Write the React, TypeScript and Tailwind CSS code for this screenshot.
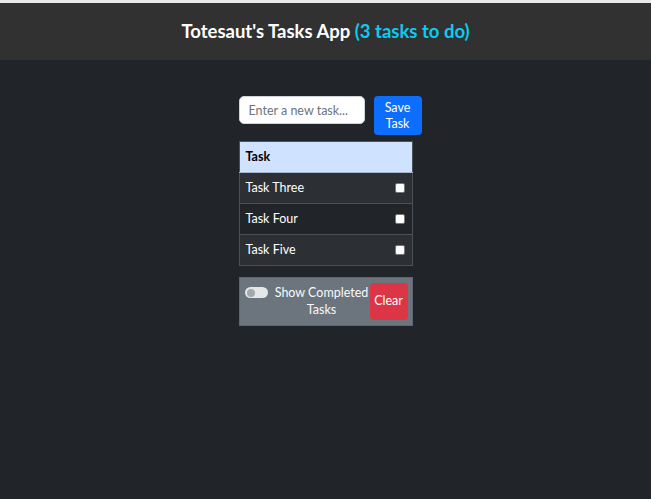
import React from "react";

const font = { fontFamily: 'Lato, "Noto Sans", sans-serif' };

export default function App() {
  const tasks = ["Task Three", "Task Four", "Task Five"];
  return (
    <div className="min-h-[499px] w-full bg-[#212529] text-[12.5px]" style={font}>
      <div className="h-[3px] bg-[#e9e9e9]" />
      <header className="flex h-[57px] items-center justify-center bg-[#313131]">
        <h1 className="text-[18.5px] font-bold leading-none text-white">
          Totesaut's Tasks App <span className="text-[#0dcaf0]">(3 tasks to do)</span>
        </h1>
      </header>
      <main className="mx-auto w-[174px] pt-[36px]">
        <div className="flex w-[183px] items-start gap-[9px]">
          <input
            className="h-[28px] w-[126px] rounded-[5px] border border-[#ced4da] bg-white px-[9px] text-[12.5px] text-[#212529] outline-none placeholder:text-[#6c757d]"
            placeholder="Enter a new task..."
          />
          <button className="flex h-[39px] w-[48px] flex-col items-center justify-center rounded-[4px] bg-[#0d6efd] text-[12.5px] leading-[16px] text-white">
            <span>Save</span>
            <span>Task</span>
          </button>
        </div>
        <table className="mt-[6px] w-[174px] border-collapse border border-[#4d5154] text-left">
          <thead>
            <tr className="h-[31px] bg-[#cfe2ff] text-black">
              <th className="border-b border-[#a6b5cc] px-[6px] font-bold">Task</th>
              <th className="border-b border-[#a6b5cc]" />
            </tr>
          </thead>
          <tbody>
            {tasks.map((t, i) => (
              <tr
                key={t}
                className={
                  "h-[31px] border-t border-[#4d5154] text-white " +
                  (i % 2 === 0 ? "bg-[#2c3034]" : "bg-[#212529]")
                }
              >
                <td className="px-[6px]">{t}</td>
                <td className="w-[20px] pr-[7px] text-right align-middle">
                  <span className="inline-block h-[10px] w-[10px] translate-y-[1px] rounded-[2px] border border-[#767676] bg-white" />
                </td>
              </tr>
            ))}
          </tbody>
        </table>
        <div className="mt-[11px] flex h-[49px] w-[174px] items-center justify-between border border-[#5f666d] bg-[#6c757d] pl-[5px] pr-[4px]">
          <div className="flex items-start self-start pt-[6px]">
            <span className="mt-[3px] flex h-[11px] w-[23px] items-center rounded-full bg-[#e4e6e8] px-[2px]">
              <span className="h-[8px] w-[8px] rounded-full bg-[#a3a8ad]" />
            </span>
            <span className="ml-[7px] w-[94px] text-center leading-[17px] text-[#f8f9fa]">
              Show Completed Tasks
            </span>
          </div>
          <button className="h-[37px] w-[38px] rounded-[4px] bg-[#dc3545] text-[12.5px] text-white">
            Clear
          </button>
        </div>
      </main>
    </div>
  );
}
